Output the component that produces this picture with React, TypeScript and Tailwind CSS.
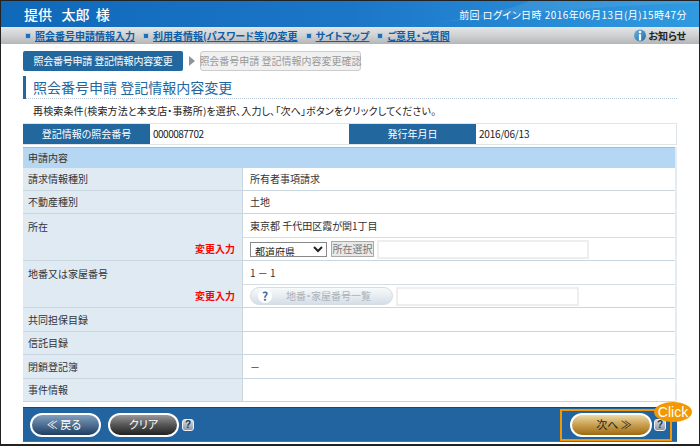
import React from "react";

const FONT = '"Noto Sans CJK JP", "Liberation Sans", sans-serif';

function Help() {
  return (
    <span className="flex h-[12px] w-[12px] items-center justify-center rounded-[3px] border border-[#eef2f6] bg-gradient-to-b from-[#d8dde3] to-[#8d97a3] text-[10px] font-bold leading-none text-[#2a3340]" style={{ fontFamily: '"Liberation Sans", sans-serif' }}>?</span>
  );
}

function NavItem({ label }: { label: string }) {
  return (
    <span className="flex items-center gap-[5px]">
      <span className="h-[4px] w-[4px] bg-[#1f6fb5] outline outline-1 outline-[#a9c6e0]" />
      <span className="text-[10px] font-bold leading-none text-[#0f5ea8] underline">{label}</span>
    </span>
  );
}

function Row({ label, value, h = "h-[23px]" }: { label: string; value?: string; h?: string }) {
  return (
    <div className={`flex ${h} border-b border-[#c9d5df]`}>
      <div className="flex w-[220px] shrink-0 items-center border-r border-[#c9d5df] bg-[#dfeaf3] pl-[5px] text-[#333]">{label}</div>
      <div className="flex flex-1 items-center bg-white pl-[7px] text-[#333]">{value}</div>
    </div>
  );
}

function InputRow({ label, value, children }: { label: string; value: string; children: React.ReactNode }) {
  return (
    <div className="flex border-b border-[#c9d5df]">
      <div className="flex w-[220px] shrink-0 flex-col border-r border-[#c9d5df] bg-[#dfeaf3] pl-[5px] pr-[7px] text-[#333]">
        <div className="flex h-[24px] items-center pt-[2px]">{label}</div>
        <div className="flex h-[22px] items-center justify-end font-bold text-[#ff0000]">変更入力</div>
      </div>
      <div className="flex flex-1 flex-col bg-white text-[#333]">
        <div className="flex h-[24px] items-center border-b border-[#d5dee6] pl-[7px]">{value}</div>
        <div className="flex h-[22px] items-center gap-[3px] pl-[7px]">{children}</div>
      </div>
    </div>
  );
}

function Pill({ label, cls, w }: { label: string; cls: string; w: string }) {
  return (
    <span className={`flex h-[24px] ${w} items-center justify-center rounded-full border-2 border-white text-[11px] font-normal ${cls}`}>{label}</span>
  );
}

export default function App() {
  return (
    <div className="relative flex h-[446px] w-[700px] flex-col overflow-hidden border-x border-t-[1px] border-b-[2px] border-[#222] bg-white text-[10px] leading-none [font-feature-settings:'palt']" style={{ fontFamily: FONT }}>
      <header className="relative flex h-[26px] shrink-0 items-center justify-between overflow-hidden bg-gradient-to-r from-[#0f68b8] via-[#1c76c8] to-[#2f9ae0] pl-[23px] pr-[12px]">
        <svg className="absolute right-0 top-0 h-[26px] w-[420px]" viewBox="0 0 420 26" preserveAspectRatio="none">
          <path d="M120 26C220 14 330 4 420 2V0H250C230 10 180 20 120 26Z" fill="#ffffff" opacity="0.08" />
        </svg>
        <span className="relative text-[14px] font-medium text-white">提供&nbsp;&nbsp;&nbsp;太郎&nbsp;&nbsp;様</span>
        <span className="relative pt-[1px] text-[10px] tracking-[0.45px] text-white">前回 ログイン日時 2016年06月13日(月)15時47分</span>
      </header>

      <nav className="flex h-[17px] shrink-0 items-center justify-between bg-gradient-to-b from-[#e4e5e6] via-[#cfd1d3] to-[#b4b6b8] pl-[25px] pr-[13px]">
        <div className="flex items-center gap-[9px]">
          <NavItem label="照会番号申請情報入力" />
          <NavItem label="利用者情報(パスワード等)の変更" />
          <NavItem label="サイトマップ" />
          <NavItem label="ご意見・ご質問" />
        </div>
        <div className="flex items-center gap-[2px]">
          <svg width="12" height="13" viewBox="0 0 12 13">
            <defs>
              <linearGradient id="inf" x1="0" y1="0" x2="1" y2="1">
                <stop offset="0" stopColor="#6fb0dc" />
                <stop offset="1" stopColor="#1c6fae" />
              </linearGradient>
            </defs>
            <circle cx="6" cy="6.5" r="6" fill="url(#inf)" />
            <rect x="4.9" y="5.2" width="2.2" height="6.3" fill="#fff" />
            <circle cx="6" cy="3" r="1.3" fill="#fff" />
          </svg>
          <span className="text-[10px] font-bold text-[#222]">お知らせ</span>
        </div>
      </nav>

      <main className="flex flex-1 flex-col pl-[22px] pr-[22px]">
        <div className="mt-[7px] flex h-[20px] items-center">
          <span className="flex h-[20px] w-[160px] items-center justify-center rounded-[2px] bg-[#22689f] text-[10px] tracking-[-0.2px] whitespace-nowrap text-white">照会番号申請 登記情報内容変更</span>
          <span className="ml-[6px] mr-[5px] h-0 w-0 border-y-[5px] border-l-[6px] border-y-transparent border-l-[#8f9499]" />
          <span className="flex h-[20px] w-[161px] items-center justify-center rounded-[3px] border border-[#ccc] bg-[#f0f0f0] text-[10px] whitespace-nowrap text-[#999]">照会番号申請 登記情報内容変更確認</span>
        </div>

        <div className="mt-[5px] flex h-[23px] items-center border-b border-dotted border-[#b7c6d8]">
          <span className="h-[23px] w-[3px] bg-[#22689f]" />
          <span className="ml-[7px] text-[14px] text-[#22689f]">照会番号申請 登記情報内容変更</span>
        </div>

        <p className="mt-[7px] h-[12px] pl-[10px] text-[10px] tracking-[0.15px] text-[#222]">再検索条件(検索方法と本支店・事務所)を選択、入力し、「次へ」ボタンをクリックしてください。</p>

        <div className="mt-[5px] flex h-[22px] border-y border-r border-[#dfe5ea] text-[10px]">
          <div className="flex w-[127px] items-center justify-center bg-[#22689f] text-white">登記情報の照会番号</div>
          <div className="flex w-[199px] items-center pl-[3px] tracking-[-0.5px] text-[#222]">0000087702</div>
          <div className="flex w-[127px] items-center justify-center bg-[#22689f] text-white">発行年月日</div>
          <div className="flex flex-1 items-center pl-[3px] tracking-[-0.2px] text-[#222]">2016/06/13</div>
        </div>

        <section className="mt-[2px] border-r-2 border-[#e6ebf0]">
          <div className="flex h-[21px] items-center border-t border-[#8fbfe6] bg-[#b5d7f3] pl-[5px] text-[#333]">申請内容</div>
          <Row label="請求情報種別" value="所有者事項請求" />
          <Row label="不動産種別" value="土地" />
          <InputRow label="所在" value="東京都 千代田区霞が関1丁目">
            <select className="h-[15px] w-[77px] border border-[#888] bg-white text-[10px] leading-none text-[#222]" defaultValue="都道府県" style={{ fontFamily: FONT }}>
              <option>都道府県</option>
            </select>
            <span className="ml-[1px] flex h-[16px] w-[43px] items-center justify-center border border-[#aaa] bg-[#e8e8e8] text-[#777]">所在選択</span>
            <span className="h-[19px] w-[212px] border-2 border-[#eeeeee] bg-white" />
          </InputRow>
          <InputRow label="地番又は家屋番号" value="1 － 1">
            <span className="flex h-[18px] w-[143px] items-center gap-[14px] rounded-full border border-[#d5dce3] bg-gradient-to-b from-[#f8fafb] to-[#d5dfe7] pl-[7px] text-[#aab2ba]">
              <span className="flex h-[14px] w-[14px] items-center justify-center rounded-full bg-white text-[12px] font-bold text-[#3b6ea5]">?</span>
              <span>地番・家屋番号一覧</span>
            </span>
            <span className="h-[19px] w-[183px] border-2 border-[#eeeeee] bg-white" />
          </InputRow>
          <Row label="共同担保目録" h="h-[24px]" />
          <Row label="信託目録" />
          <Row label="閉鎖登記簿" value="－" h="h-[24px]" />
          <Row label="事件情報" />
        </section>

        <footer className="mt-[5px] flex h-[35px] items-center justify-between border-t border-b border-t-[#0f4a80] border-b-[#2a7ac4] bg-[#22649f] pl-[7px] pr-[5px]">
          <div className="flex items-center gap-[7px]">
            <Pill label="≪ 戻る" w="w-[71px] pr-[3px]" cls="bg-gradient-to-b from-[#84a0bd] via-[#4d6f92] to-[#1f3f60] text-white" />
            <div className="flex items-center gap-[3px]">
              <Pill label="クリア" w="w-[71px]" cls="bg-gradient-to-b from-[#999] via-[#555] to-[#222] text-white" />
              <Help />
            </div>
          </div>
          <div className="flex h-[32px] w-[112px] items-center gap-[2px] border-2 border-[#f39800] pl-[8px]">
            <Pill label="次へ ≫" w="w-[82px] pl-[6px]" cls="bg-gradient-to-b from-[#ecd9a6] via-[#c99e4e] to-[#9c6c0c] text-[#222]" />
            <Help />
          </div>
        </footer>
      </main>

      <span className="absolute left-[653px] top-[401px] flex h-[20px] w-[38px] items-center justify-center rounded-[50%] bg-[#f39800] text-[14px] text-white" style={{ fontFamily: '"Liberation Sans", sans-serif' }}>Click</span>
    </div>
  );
}
